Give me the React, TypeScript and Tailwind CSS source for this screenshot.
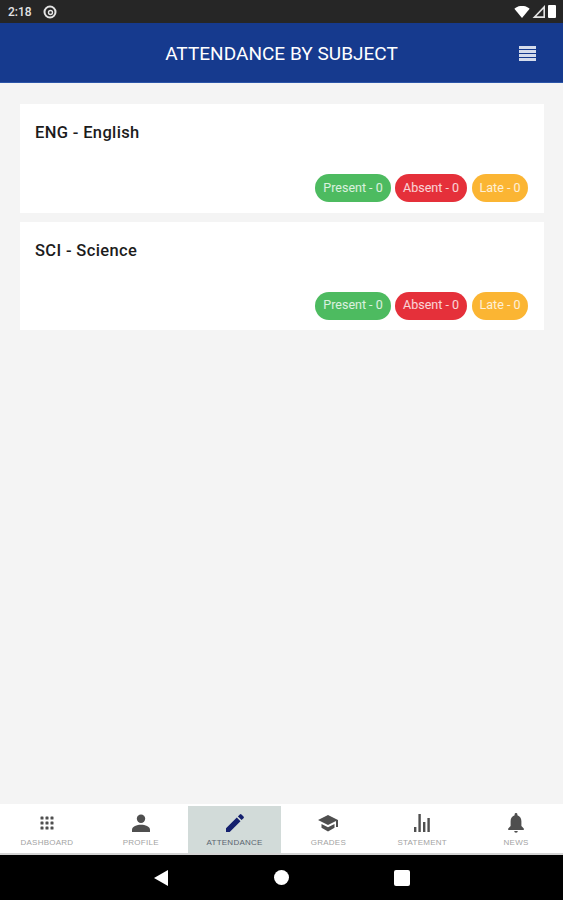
const subjects = ['ENG - English', 'SCI - Science']

function Pill({ label, className }: { label: string; className: string }) {
  return (
    <span className={`h-[28px] flex items-center justify-center rounded-full text-[12.5px] text-white/80 whitespace-nowrap ${className}`}>
      {label}
    </span>
  )
}

function SubjectCard({ name }: { name: string }) {
  return (
    <div className="h-[108.5px] bg-white flex flex-col pl-[15px] pr-[16px] pt-[19px]">
      <div className="text-[16.5px] leading-[20px] font-medium text-[#1c1c1c] tracking-[0.35px]">{name}</div>
      <div className="mt-[31px] flex justify-end">
        <Pill label="Present - 0" className="w-[76px] bg-[#4dbb60]" />
        <Pill label="Absent - 0" className="ml-[4px] w-[72px] bg-[#e5303a]" />
        <Pill label="Late - 0" className="ml-[5px] w-[56px] bg-[#fbb533]" />
      </div>
    </div>
  )
}

const navIcons: Record<string, React.ReactNode> = {
  DASHBOARD: (
    <svg viewBox="0 0 16 16" className="w-[16px] h-[16px]" fill="#4f4f4f">
      {[1.5, 6.5, 11.5].flatMap((y) => [1.5, 6.5, 11.5].map((x) => <rect key={`${x}-${y}`} x={x} y={y} width="3" height="3" rx="0.6" />))}
    </svg>
  ),
  PROFILE: (
    <svg viewBox="0 0 18 18" className="w-[18px] h-[18px]" fill="#4f4f4f">
      <circle cx="9" cy="4.8" r="4.2" />
      <path d="M0 18v-2.5C0 12.5 5 10.8 9 10.8s9 1.7 9 4.7V18z" />
    </svg>
  ),
  ATTENDANCE: (
    <svg viewBox="0 0 18 18" className="w-[18px] h-[18px]" fill="#14206e">
      <path d="M0 18v-3.7L10.8 3.5l3.7 3.7L3.7 18zM11.9 2.4 13.800.5a1.200 1.200 0 0 1 1.700 0l2 2a1.200 1.200 0 0 1 0 1.700l-1.900 1.900z" />
    </svg>
  ),
  GRADES: (
    <svg viewBox="0 0 20 17" className="w-[20px] h-[17px]" fill="#4f4f4f">
      <path d="M10 0 0 5l10 5 8-4v6h2V5z" />
      <path d="M3.500 9v3.800L10 16.500l6.500-3.700V9L10 12.300z" />
    </svg>
  ),
  STATEMENT: (
    <svg viewBox="0 0 16 18" className="w-[16px] h-[18px]" fill="#4f4f4f">
      <rect x="0" y="13" width="2.400" height="5" />
      <rect x="4.400" y="0" width="2.400" height="18" />
      <rect x="9" y="8" width="2.400" height="10" />
      <rect x="13.400" y="4" width="2.400" height="14" />
    </svg>
  ),
  NEWS: (
    <svg viewBox="0 0 16 20" className="w-[16px] h-[20px]" fill="#4f4f4f">
      <path d="M8 0a1.400 1.400 0 0 1 1.400 1.400v.8C12 3 13.400 5.400 13.400 8.200V13l2.400 2.600V17H.2v-1.400L2.600 13V8.200C2.600 5.400 4 3 6.600 2.200v-.8A1.400 1.400 0 0 1 8 0z" />
      <path d="M6.200 18h3.600a1.800 1.800 0 0 1-3.600 0z" />
    </svg>
  ),
}

function NavItem({ label, active }: { label: string; active?: boolean }) {
  return (
    <div className={`flex-1 flex flex-col items-center justify-start ${active ? 'bg-[#d2dbd9]' : ''}`}>
      <div className="h-[29px] pt-[5px] flex items-center justify-center">{navIcons[label]}</div>
      <span className={`mt-[2px] text-[8px] leading-[12px] tracking-[0.25px] font-['Liberation_Sans',sans-serif] ${active ? 'text-[#5b6570]' : 'text-[#a3a3a3]'}`}>{label}</span>
    </div>
  )
}

export default function App() {
  return (
    <div className="w-[563px] h-[900px] flex flex-col bg-[#f4f4f4] font-['Roboto',sans-serif] overflow-hidden">
      <div className="h-[23px] bg-[#262626] flex items-center justify-between pl-[8px] pr-[7px]">
        <div className="flex items-center gap-[11px]">
          <span className="text-[12px] font-medium text-[#e4e4e4]">2:18</span>
          <svg viewBox="0 0 14 14" className="w-[14px] h-[14px]" fill="none" stroke="#e4e4e4">
            <circle cx="7" cy="7" r="5.500" strokeWidth="2" />
            <circle cx="7.500" cy="7.500" r="2" strokeWidth="1.400" />
          </svg>
        </div>
        <div className="flex items-center gap-[2px]">
          <svg viewBox="0 0 14 11" className="w-[16px] h-[12px]" fill="#fff"><path d="M0 2.500C4-1 10-1 14 2.500L7 11z" /></svg>
          <svg viewBox="0 0 12 12" className="w-[14px] h-[13px]" fill="none" stroke="#e4e4e4" strokeWidth="1.500"><path d="M10.800 1.800v9.400H1.800z" /></svg>
          <div className="w-[8px] h-[13px] rounded-[1px] bg-white" />
        </div>
      </div>

      <header className="h-[60px] bg-[#163a8e] border-b border-[#2b55a8] relative flex items-center justify-center">
        <h1 className="mt-[3px] text-[19px] text-white tracking-[0.03px]">ATTENDANCE BY SUBJECT</h1>
        <div className="absolute right-[27px] top-[23px] w-[17px] h-[15px] flex flex-col justify-between">
          {[0, 1, 2, 3].map((i) => (
            <div key={i} className="h-[3px] bg-[#d5dcec]" />
          ))}
        </div>
      </header>

      <main className="flex-1 pl-[20px] pr-[19px] pt-[21px] flex flex-col gap-[9px]">
        {subjects.map((s) => (
          <SubjectCard key={s} name={s} />
        ))}
      </main>

      <nav className="h-[51px] bg-white flex pt-[2px] border-b-2 border-[#d4d4d4]">
        <NavItem label="DASHBOARD" />
        <NavItem label="PROFILE" />
        <NavItem label="ATTENDANCE" active />
        <NavItem label="GRADES" />
        <NavItem label="STATEMENT" />
        <NavItem label="NEWS" />
      </nav>

      <div className="h-[45px] bg-black flex items-center justify-center">
        <div className="flex items-center pl-[1px]">
          <svg viewBox="0 0 14 16" className="w-[14px] h-[16px]" fill="#fff"><path d="M14 0v16L0 8z" /></svg>
          <div className="ml-[106px] w-[15px] h-[15px] rounded-full bg-white" />
          <div className="ml-[105px] w-[16px] h-[16px] rounded-[2px] bg-white" />
        </div>
      </div>
    </div>
  )
}
